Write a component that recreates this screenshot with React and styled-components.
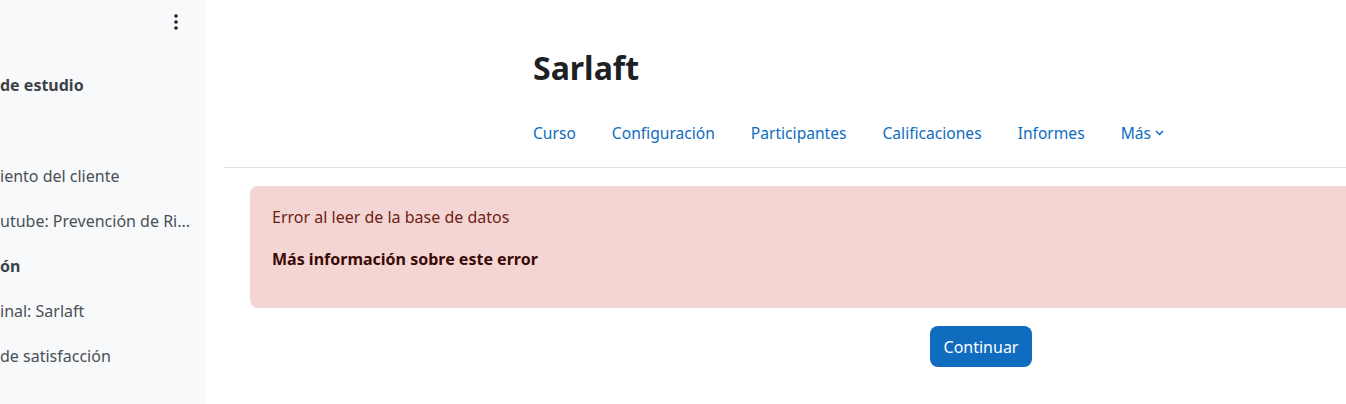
import React from 'react';
import styled, { createGlobalStyle } from 'styled-components';

const GlobalStyle = createGlobalStyle`
  html, body {
    margin: 0;
    padding: 0;
    background: #fff;
    overflow: hidden;
  }
  body {
    font-family: "Noto Sans", "Open Sans", sans-serif;
    color: #1d2125;
  }
`;

const Page = styled.div`
  display: flex;
  width: 1346px;
  height: 404px;
  overflow: hidden;
`;

const Sidebar = styled.aside`
  width: 206px;
  flex-shrink: 0;
  background: #f8f9fa;
  overflow: hidden;
`;

const SidebarTop = styled.div`
  display: flex;
  justify-content: flex-end;
  padding: 12px 22px 0 0;
  height: 20px;
`;

const KebabButton = styled.button`
  border: 0;
  background: transparent;
  padding: 0;
  width: 16px;
  height: 20px;
  display: flex;
  align-items: center;
  justify-content: center;
  color: #1d2125;
`;

const SidebarList = styled.ul`
  list-style: none;
  margin: 0;
  padding: 31px 0 0 0;
`;

const SidebarItem = styled.li`
  height: 45px;
  line-height: 45px;
  font-size: 16px;
  white-space: nowrap;
  overflow: hidden;
  color: ${(p) => (p.$section ? '#3d4348' : '#495057')};
  font-weight: ${(p) => (p.$section ? 700 : 400)};
  margin-bottom: ${(p) => (p.$gapAfter ? '46px' : '0')};
`;

const Main = styled.main`
  flex: 1;
  min-width: 0;
  overflow: hidden;
`;

const Header = styled.header`
  padding: 44px 0 0 327px;
`;

const Title = styled.h1`
  margin: 0;
  font-size: 32px;
  line-height: 48px;
  font-weight: 700;
  color: #1d2125;
`;

const Nav = styled.nav`
  display: flex;
  align-items: center;
  gap: 36px;
  height: 44px;
  margin-top: 19px;
`;

const NavLink = styled.a`
  display: flex;
  align-items: center;
  gap: 4px;
  color: #0f6cbf;
  font-size: 15.6px;
  text-decoration: none;
  white-space: nowrap;
`;

const Divider = styled.hr`
  margin: 12px 0 0 18px;
  border: 0;
  border-top: 1px solid #dee2e6;
`;

const Content = styled.div`
  width: 1462px;
  margin: 18px 0 0 44px;
  display: flex;
  flex-direction: column;
  align-items: center;
`;

const Alert = styled.div`
  align-self: stretch;
  box-sizing: border-box;
  height: 122px;
  padding: 20px 22px;
  background: #f3d6d3;
  border-radius: 8px;
  color: #6e1d14;
  font-size: 16px;
`;

const AlertText = styled.p`
  margin: 0 0 20px;
  line-height: 22px;
`;

const AlertStrong = styled.p`
  margin: 0;
  font-weight: 700;
  line-height: 22px;
  color: #3a0a06;
`;

const PrimaryButton = styled.button`
  margin-top: 18px;
  height: 41px;
  padding: 0 14px;
  border: 0;
  border-radius: 8px;
  background: #0f6cbf;
  color: #fff;
  font-family: inherit;
  font-size: 16px;
`;

const KebabIcon = () => (
  <svg width="4" height="16" viewBox="0 0 4 16" fill="currentColor">
    <circle cx="2" cy="2" r="1.8" />
    <circle cx="2" cy="8" r="1.8" />
    <circle cx="2" cy="14" r="1.8" />
  </svg>
);

const Chevron = () => (
  <svg width="9" height="6" viewBox="0 0 9 6" fill="none" stroke="currentColor" strokeWidth="1.5">
    <path d="M1 1l3.5 3.5L8 1" />
  </svg>
);

const sidebarItems = [
  { text: 'de estudio', section: true, gapAfter: true },
  { text: 'iento del cliente' },
  { text: 'utube: Prevención de Ri...' },
  { text: 'ón', section: true },
  { text: 'inal: Sarlaft' },
  { text: 'de satisfacción' },
];

const navItems = ['Curso', 'Configuración', 'Participantes', 'Calificaciones', 'Informes'];

export default function App() {
  return (
    <>
      <GlobalStyle />
      <Page>
        <Sidebar>
          <SidebarTop>
            <KebabButton aria-label="Opciones">
              <KebabIcon />
            </KebabButton>
          </SidebarTop>
          <SidebarList>
            {sidebarItems.map((item) => (
              <SidebarItem key={item.text} $section={item.section} $gapAfter={item.gapAfter}>
                {item.text}
              </SidebarItem>
            ))}
          </SidebarList>
        </Sidebar>
        <Main>
          <Header>
            <Title>Sarlaft</Title>
            <Nav>
              {navItems.map((n) => (
                <NavLink key={n} href="#">{n}</NavLink>
              ))}
              <NavLink href="#">
                Más <Chevron />
              </NavLink>
            </Nav>
          </Header>
          <Divider />
          <Content>
            <Alert>
              <AlertText>Error al leer de la base de datos</AlertText>
              <AlertStrong>Más información sobre este error</AlertStrong>
            </Alert>
            <PrimaryButton>Continuar</PrimaryButton>
          </Content>
        </Main>
      </Page>
    </>
  );
}
